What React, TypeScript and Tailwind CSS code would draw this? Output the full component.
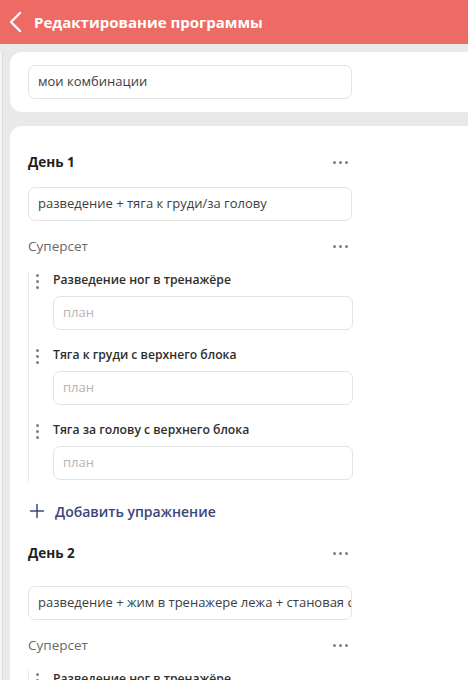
import { Plus } from "lucide-react";

const font = { fontFamily: '"Open Sans", "Noto Sans", sans-serif' };

function Dots() {
    return (
        <div className="flex gap-[3px] pr-1">
            <span className="w-[3px] h-[3px] rounded-full bg-[#7a7f88]" />
            <span className="w-[3px] h-[3px] rounded-full bg-[#7a7f88]" />
            <span className="w-[3px] h-[3px] rounded-full bg-[#7a7f88]" />
        </div>
    );
}

function VDots() {
    return (
        <div className="flex flex-col gap-[3px] w-[3px] mt-[1px]">
            <span className="w-[3px] h-[3px] rounded-full bg-[#7a7f88]" />
            <span className="w-[3px] h-[3px] rounded-full bg-[#7a7f88]" />
            <span className="w-[3px] h-[3px] rounded-full bg-[#7a7f88]" />
        </div>
    );
}

function Field({ value, placeholder, wide = true }: { value?: string; placeholder?: string; wide?: boolean }) {
    return (
        <div
            className={`h-[34px] ${wide ? "w-[324px]" : "w-[300px]"} rounded-[7px] border border-[#e3e3e3] bg-white flex items-center px-[9px] overflow-hidden whitespace-nowrap text-[13px]`}
        >
            {value ? (
                <span className="text-[#3d3d3d]">{value}</span>
            ) : (
                <span className="text-[#b4b4b4]">{placeholder}</span>
            )}
        </div>
    );
}

function Exercise({ name }: { name: string }) {
    return (
        <div className="flex">
            <div className="w-[24px] flex justify-start pl-[7px] pt-[2px]">
                <VDots />
            </div>
            <div className="flex flex-col">
                <div className="h-[18px] text-[12.2px] font-semibold text-[#2e2e2e] leading-[18px] mb-[7px]">{name}</div>
                <Field placeholder="план" wide={false} />
            </div>
        </div>
    );
}

function Day({ title, combo, exercises, gap }: { title: string; combo: string; exercises: string[]; gap: string }) {
    return (
        <div className="flex flex-col">
            <div className="flex items-center justify-between w-[324px] h-[20px]">
                <span className="text-[13.5px] font-bold text-[#222]">{title}</span>
                <Dots />
            </div>
            <div className={gap}>
                <Field value={combo} />
            </div>
            <div className="flex items-center justify-between w-[324px] h-[20px] mt-[15px]">
                <span className="text-[13.5px] text-[#6a6a6a]">Суперсет</span>
                <Dots />
            </div>
            <div className="border-l border-[#ececec] mt-[15px] flex flex-col gap-[16px] pb-[2px]">
                {exercises.map((e) => (
                    <Exercise key={e} name={e} />
                ))}
            </div>
        </div>
    );
}

export default function App() {
    return (
        <div className="w-[468px] h-[680px] overflow-hidden bg-[#e9e9e9]" style={font}>
            <div className="h-[44px] bg-[#ee6a64] flex items-center pl-[8px] gap-[12px]">
                <svg width="14" height="22" viewBox="0 0 14 22" fill="none">
                    <polyline points="12,2 3,11 12,20" stroke="white" strokeWidth="2.4" strokeLinecap="round" strokeLinejoin="round" />
                </svg>
                <span className="text-white text-[15px] font-bold">Редактирование программы</span>
            </div>
            <div className="flex">
                <div className="w-[3px] shrink-0 bg-[#f4f4f4] border-r border-[#dcdcdc] mt-[8px]" />
                <div className="flex-1 ml-[7px] pt-[8px] flex flex-col gap-[14px]">
                    <div className="bg-white rounded-l-[12px] h-[60px] flex items-center pl-[18px]">
                        <Field value="мои комбинации" />
                    </div>
                    <div className="bg-white rounded-l-[12px] pl-[18px] pt-[26px] pb-[20px] flex flex-col">
                        <Day
                            title="День 1"
                            gap="mt-[15px]"
                            combo="разведение + тяга к груди/за голову"
                            exercises={[
                                "Разведение ног в тренажёре",
                                "Тяга к груди с верхнего блока",
                                "Тяга за голову с верхнего блока",
                            ]}
                        />
                        <div className="flex items-center gap-[7px] h-[24px] mt-[17px] text-[#3a4677]">
                            <Plus size={22} strokeWidth={1.6} className="-ml-[2px]" />
                            <span className="text-[14px] font-semibold">Добавить упражнение</span>
                        </div>
                        <div className="mt-[20px]">
                            <Day
                                title="День 2"
                                gap="mt-[23px]"
                                combo="разведение + жим в тренажере лежа + становая с гантелями"
                                exercises={[
                                    "Разведение ног в тренажёре",
                                    "Жим в тренажере лежа",
                                ]}
                            />
                        </div>
                    </div>
                </div>
            </div>
        </div>
    );
}
